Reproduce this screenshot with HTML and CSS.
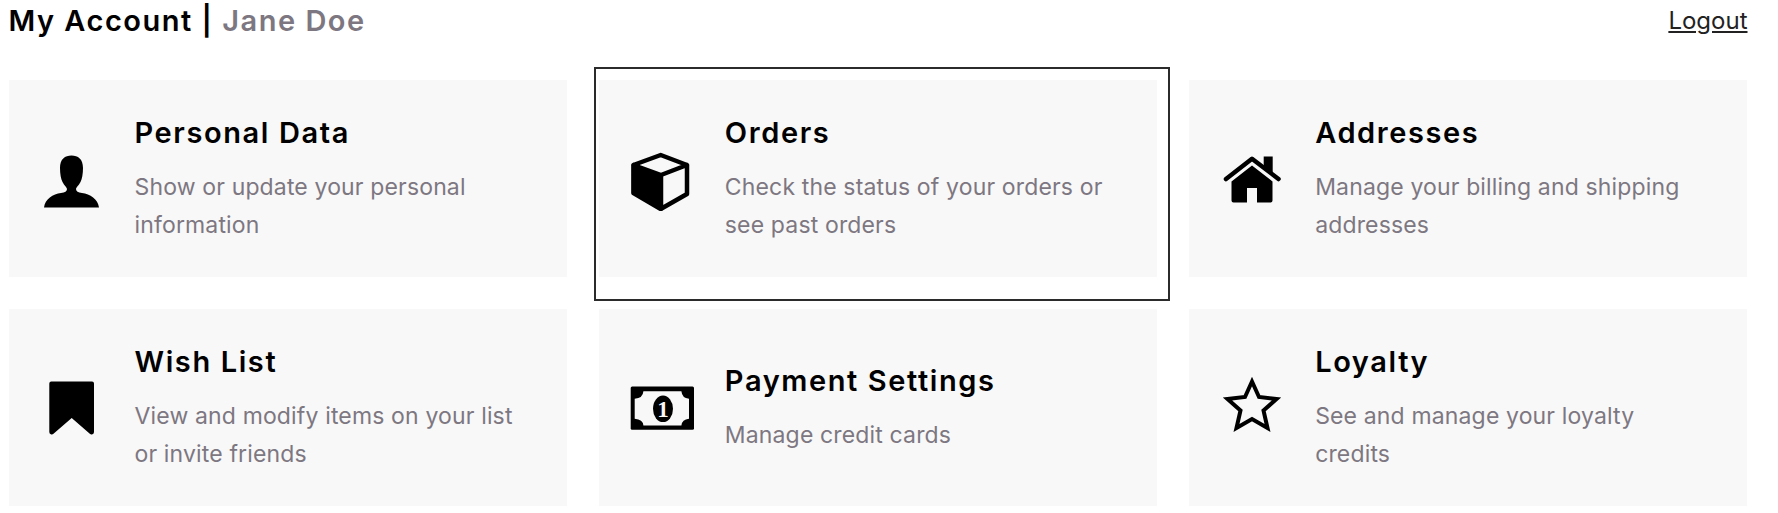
FILE: index.html
```html
<!DOCTYPE html>
<html lang="en">
  <head>
    <meta charset="UTF-8" />
    <title>My Account</title>
    <link rel="stylesheet" href="styles.css">
  </head>
  <body>
    <div class="header">
      <h1>My Account | <span class="user-name">Jane Doe</span></h1>
      <a class="logout" href="#">Logout</a>
    </div>
    <div class="cards">
      <div class="card">
        <svg class="icon" viewBox="0 0 64 64">
          <path d="M4 60.5C5 52 13 47 21 46c4-.5 6-1.5 6-4 0-1.5-3-4-4.500-7C21 32 20 27 20 21c0-9 5-12.500 11.500-12.500S43 12 43 21c0 6-1 11-2.500 14-1.500 3-4.500 5.500-4.500 7 0 2.500 2 3.500 6 4 8 1 16 6 17 14.500z" />
        </svg>
        <div class="card-text">
          <h3>Personal Data</h3>
          <p>Show or update your personal information</p>
        </div>
      </div>
      <div class="card card-selected">
        <svg class="icon" viewBox="0 0 64 64">
          <path d="M3.400 18 31 28V62L3.400 46z" />
          <path class="line" d="M30.700 8 57 18V47L30.700 62 3.400 46V18zM3.400 18 31 28 57 18M31 28V62" />
        </svg>
        <div class="card-text">
          <h3>Orders</h3>
          <p>Check the status of your orders or see past orders</p>
        </div>
      </div>
      <div class="card">
        <svg class="icon" viewBox="0 0 64 64">
          <path d="M42.700 9.500h9v18l-9-7z" />
          <path class="line" d="M5 32 31 11.800 57.500 32" />
          <path d="M31 18.500 51.500 34.500V53.500q0 2-2 2H36V41H26V55.500H12.500q-2 0-2-2V34.500z" />
        </svg>
        <div class="card-text">
          <h3>Addresses</h3>
          <p>Manage your billing and shipping addresses</p>
        </div>
      </div>
      <div class="card">
        <svg class="icon" viewBox="0 0 64 64">
          <path d="M11.300 5.500H52a2 2 0 0 1 2 2V56a2.500 2.500 0 0 1-4.200 1.800L31.700 42 13.500 57.800A2.500 2.500 0 0 1 9.300 56V7.500a2 2 0 0 1 2-2z" />
        </svg>
        <div class="card-text">
          <h3>Wish List</h3>
          <p>View and modify items on your list or invite friends</p>
        </div>
      </div>
      <div class="card">
        <svg class="icon" viewBox="0 0 64 64">
          <rect x="0.700" y="10.500" width="63.300" height="43.300" rx="1.500" />
          <path class="note" d="M13.400 15.200H51.400Q52 22 59 22.800V42.800Q52 43.500 51.400 49.500H13.400Q13 43.500 4.700 42.800V22.800Q13 22 13.400 15.200z" />
          <ellipse cx="33" cy="32.800" rx="10" ry="13.300" />
          <text class="note-value" x="33" y="40.500">1</text>
        </svg>
        <div class="card-text">
          <h3>Payment Settings</h3>
          <p>Manage credit cards</p>
        </div>
      </div>
      <div class="card">
        <svg class="icon" viewBox="0 0 64 64">
          <path class="line star" d="M31 5.500 38 21 55.500 23 42.500 34.500 46.500 52 31 43 15.500 52 19.500 34.500 6.500 23 24 21z" />
        </svg>
        <div class="card-text">
          <h3>Loyalty</h3>
          <p>See and manage your loyalty credits</p>
        </div>
      </div>
    </div>
  </body>
</html>
```

FILE: styles.css
```css
body {
  font-family: "Inter", "Open Sans", sans-serif;
  background-color: white;
  color: black;
  margin: 0;
  padding: 0 30.500px 0 8.500px;
}
.header {
  display: flex;
  justify-content: space-between;
  align-items: center;
  height: 41px;
  margin-bottom: 39px;
}
h1 {
  font-size: 29px;
  font-weight: 600;
  letter-spacing: 1.500px;
  margin: 0;
}
.user-name {
  color: #7d7781;
}
.logout {
  color: #222;
  font-size: 24px;
}
.cards {
  display: grid;
  grid-template-columns: repeat(3, 1fr);
  grid-auto-rows: 197px;
  gap: 32px;
}
.card {
  display: flex;
  align-items: center;
  background-color: #f8f8f8;
  padding-left: 31.500px;
  position: relative;
}
.card-selected::after {
  content: "";
  position: absolute;
  top: -13px;
  right: -13px;
  bottom: -24px;
  left: -5px;
  border: 2.500px solid #2b2b2b;
  pointer-events: none;
}
.card-selected {
  z-index: 1;
}
.icon {
  width: 64px;
  height: 64px;
  flex-shrink: 0;
  fill: black;
  margin-right: 30.500px;
}
.icon .line {
  fill: none;
  stroke: black;
  stroke-width: 4.500;
  stroke-linejoin: round;
  stroke-linecap: round;
}
.icon .star {
  stroke-width: 4;
  stroke-linejoin: miter;
}
.icon .note {
  fill: #f8f8f8;
}
.icon .note-value {
  fill: #f8f8f8;
  font-family: "Liberation Serif", serif;
  font-size: 23px;
  font-weight: 700;
  text-anchor: middle;
}
.card-text {
  padding-right: 40px;
}
h3 {
  font-size: 29px;
  font-weight: 600;
  letter-spacing: 1.600px;
  line-height: 38px;
  margin: 0 0 16px 0;
}
p {
  color: #7d7781;
  font-size: 23px;
  letter-spacing: 0.150px;
  line-height: 38px;
  margin: 0;
}
```
